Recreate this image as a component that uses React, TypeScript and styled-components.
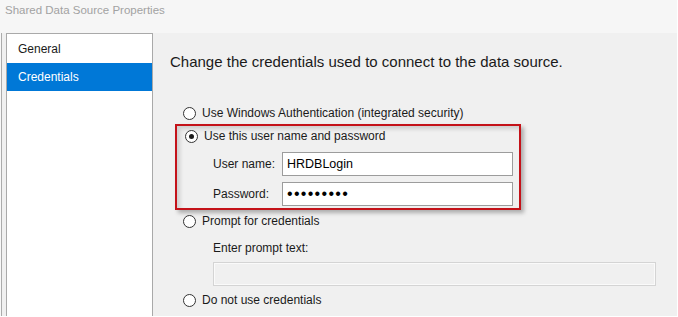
import styled, { createGlobalStyle } from 'styled-components';

const GlobalStyle = createGlobalStyle`
  html, body {
    margin: 0;
    padding: 0;
    background: #f0f0f0;
  }
  body {
    font-family: "Segoe UI", "Liberation Sans", Arial, sans-serif;
    font-size: 12px;
    color: #1a1a1a;
  }
`;

const Window = styled.div`
  display: flex;
  flex-direction: column;
  width: 678px;
  height: 317px;
  box-sizing: border-box;
  overflow: hidden;
  background: #f0f0f0;
  border-right: 1px solid #ffffff;
  border-bottom: 1px solid #ffffff;
  box-shadow: inset 1px 0 0 #f8f8f8, inset 2px 0 0 #ababab;
`;

const TitleBar = styled.div`
  height: 33px;
  flex-shrink: 0;
  padding-left: 5px;
  line-height: 20px;
  font-size: 11.5px;
  color: #a2a2a2;
  background: #f6f6f6;
`;

const Body = styled.div`
  display: flex;
  flex: 1;
  padding-left: 6px;
`;

const Sidebar = styled.div`
  width: 147px;
  box-sizing: border-box;
  border: 1px solid #a9a9a9;
  border-bottom: none;
  background: #ffffff;
  padding: 1px 0 0;
  display: flex;
  flex-direction: column;
`;

const NavItem = styled.div<{ $active?: boolean }>`
  height: 28px;
  line-height: 28px;
  padding-left: 11px;
  font-size: 12px;
  background: ${(p) => (p.$active ? '#0078d7' : 'transparent')};
  color: ${(p) => (p.$active ? '#ffffff' : '#1a1a1a')};
`;

const Content = styled.div`
  flex: 1;
  display: flex;
  flex-direction: column;
`;

const Heading = styled.h2`
  margin: 19px 0 0 17px;
  font-size: 15px;
  font-weight: 400;
  line-height: 20px;
  color: #1a1a1a;
`;

const Options = styled.div`
  display: flex;
  flex-direction: column;
  align-items: flex-start;
  margin-top: 31px;
  padding-left: 22px;
`;

const RadioRow = styled.div<{ $gap?: number }>`
  display: flex;
  align-items: center;
  gap: 6px;
  height: 20px;
  padding-left: 8px;
  margin-top: ${(p) => p.$gap ?? 0}px;
`;

const RadioCircle = styled.span<{ $checked?: boolean }>`
  position: relative;
  width: 13px;
  height: 13px;
  box-sizing: border-box;
  border: 1px solid #333333;
  border-radius: 50%;
  background: #ffffff;
  flex-shrink: 0;

  &::after {
    content: '';
    display: ${(p) => (p.$checked ? 'block' : 'none')};
    position: absolute;
    left: 3px;
    top: 3px;
    width: 5px;
    height: 5px;
    border-radius: 50%;
    background: #1a1a1a;
  }
`;

const Highlight = styled.div`
  width: 346px;
  box-sizing: border-box;
  margin-top: 1px;
  border: 2px solid #c41219;
  padding: 0 6px 2px 0;
  box-shadow: 3px 3px 4px rgba(0, 0, 0, 0.28),
    inset 3px 3px 4px rgba(0, 0, 0, 0.14);
`;

const FieldRow = styled.div`
  display: flex;
  align-items: center;
  margin-top: 6px;
  padding-left: 36px;
`;

const FieldLabel = styled.span`
  width: 69px;
  flex-shrink: 0;
`;

const TextBox = styled.div<{ $secret?: boolean }>`
  flex: 1;
  height: 24px;
  box-sizing: border-box;
  border: 1px solid #9c9c9c;
  background: #ffffff;
  padding-left: 4px;
  line-height: 22px;
  font-size: ${(p) => (p.$secret ? '16px' : '12.5px')};
  letter-spacing: ${(p) => (p.$secret ? '1.3px' : '0')};
  color: #000;
`;

const PromptLabel = styled.div`
  margin: 7px 0 0 38px;
  line-height: 20px;
`;

const DisabledBox = styled.div`
  width: 443px;
  height: 24px;
  box-sizing: border-box;
  margin: 4px 0 0 38px;
  border: 1px solid #d4d4d4;
  background: #f0f0f0;
  box-shadow: inset 0 0 0 1px #fafafa;
`;

export default function App() {
  return (
    <>
      <GlobalStyle />
      <Window>
        <TitleBar>Shared Data Source Properties</TitleBar>
        <Body>
          <Sidebar>
            <NavItem>General</NavItem>
            <NavItem $active>Credentials</NavItem>
          </Sidebar>
          <Content>
            <Heading>Change the credentials used to connect to the data source.</Heading>
            <Options>
              <RadioRow>
                <RadioCircle />
                Use Windows Authentication (integrated security)
              </RadioRow>
              <Highlight>
                <RadioRow>
                  <RadioCircle $checked />
                  Use this user name and password
                </RadioRow>
                <FieldRow>
                  <FieldLabel>User name:</FieldLabel>
                  <TextBox>HRDBLogin</TextBox>
                </FieldRow>
                <FieldRow>
                  <FieldLabel>Password:</FieldLabel>
                  <TextBox $secret>•••••••••</TextBox>
                </FieldRow>
              </Highlight>
              <RadioRow $gap={1}>
                <RadioCircle />
                Prompt for credentials
              </RadioRow>
              <PromptLabel>Enter prompt text:</PromptLabel>
              <DisabledBox />
              <RadioRow $gap={4}>
                <RadioCircle />
                Do not use credentials
              </RadioRow>
            </Options>
          </Content>
        </Body>
      </Window>
    </>
  );
}
